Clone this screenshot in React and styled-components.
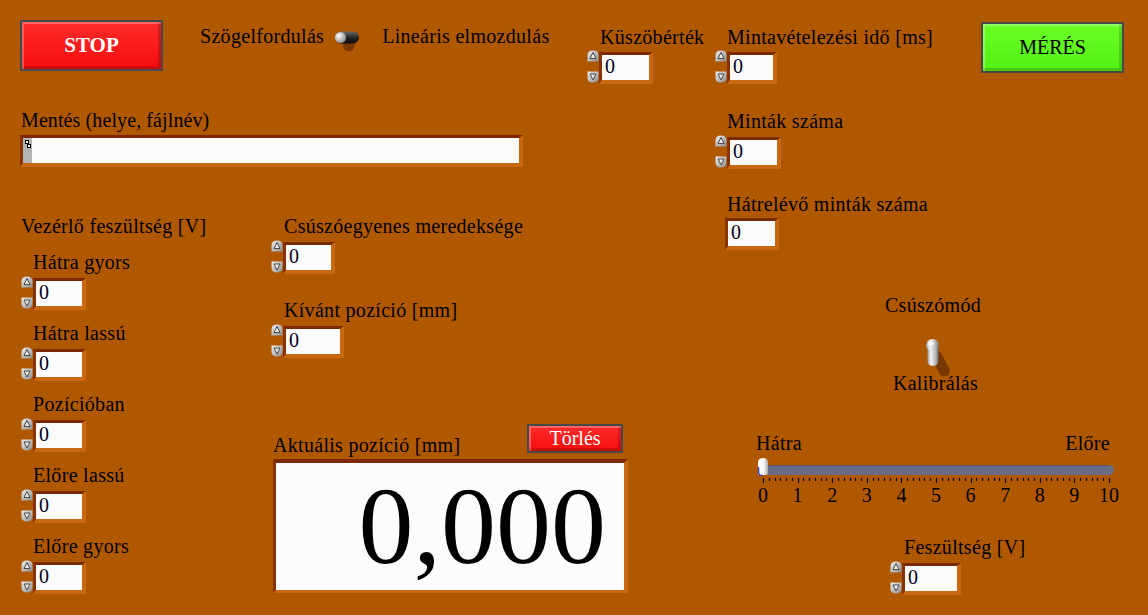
import React from 'react';
import styled, { createGlobalStyle } from 'styled-components';

const GlobalStyle = createGlobalStyle`
  html, body {
    margin: 0;
    padding: 0;
    background: #b05800;
  }
  body {
    font-family: 'Liberation Serif', 'Times New Roman', serif;
  }
`;

const Panel = styled.div`
  width: 1148px;
  height: 615px;
  overflow: hidden;
  display: flex;
  background: #b05800;
  color: #000;
  font-family: 'Liberation Serif', 'Times New Roman', serif;
  font-size: 20px;
`;

const LeftArea = styled.div`
  width: 714px;
  display: flex;
  flex-direction: column;
`;

const RightArea = styled.div`
  flex: 1;
  display: flex;
  flex-direction: column;
`;

const Row = styled.div`
  display: flex;
  align-items: flex-start;
`;

const Column = styled.div`
  display: flex;
  flex-direction: column;
  align-items: flex-start;
  margin-top: ${(p) => p.$top || 0}px;
  margin-left: ${(p) => p.$left || 0}px;
  width: ${(p) => (p.$width ? `${p.$width}px` : 'auto')};
`;

const Label = styled.div`
  height: 22px;
  line-height: 22px;
  font-size: 20px;
  letter-spacing: ${(p) => p.$spacing ?? 0.3}px;
  white-space: nowrap;
  margin-top: ${(p) => p.$top || 0}px;
  margin-left: ${(p) => p.$indent || 0}px;
`;

/* ---------- numeric controls ---------- */

const NumRow = styled.div`
  display: flex;
  align-items: flex-start;
  height: 34px;
  margin-top: ${(p) => p.$gap ?? 3}px;
`;

const Spinner = styled.div`
  width: 12px;
  height: 33px;
  display: flex;
  flex-direction: column;
  justify-content: space-between;
  align-items: flex-start;
`;

const Field = styled.div`
  box-sizing: border-box;
  width: ${(p) => p.$w || 53}px;
  height: 32px;
  margin-top: ${(p) => p.$top ?? 2}px;
  margin-left: ${(p) => p.$left || 0}px;
  border-style: solid;
  border-width: 3px 4px 4px 3px;
  border-color: #7a2900 #c9690f #c9690f #8a3300;
  background: #fbfbfb;
  padding-left: 3px;
  font-size: 20px;
  line-height: 23px;
  color: #000018;
`;

const SpinArrow = ({ down }) => (
  <svg width="12" height="12" viewBox="0 0 12 12">
    <defs>
      <linearGradient id={down ? 'spinDn' : 'spinUp'} x1="0" y1="0" x2="1" y2="1">
        <stop offset="0" stopColor="#f0f0f0" />
        <stop offset="1" stopColor="#8a8a8a" />
      </linearGradient>
    </defs>
    {down ? (
      <>
        <path d="M0.5,0.5 H11.5 V6.5 Q11.5,11.5 6,11.5 Q0.5,11.5 0.5,6.5 Z" fill="url(#spinDn)" />
        <polygon points="3,3 9,3 6,9" fill="#e8e8e8" stroke="#3c3c3c" strokeWidth="0.9" />
      </>
    ) : (
      <>
        <path d="M0.5,11.5 V5.5 Q0.5,0.5 6,0.5 Q11.5,0.5 11.5,5.5 V11.5 Z" fill="url(#spinUp)" />
        <polygon points="6,2.5 9,8.5 3,8.5" fill="#e8e8e8" stroke="#3c3c3c" strokeWidth="0.9" />
      </>
    )}
  </svg>
);

const Numeric = ({ w, gap, value = '0' }) => (
  <NumRow $gap={gap}>
    <Spinner>
      <SpinArrow />
      <SpinArrow down />
    </Spinner>
    <Field $w={w}>{value}</Field>
  </NumRow>
);

/* ---------- buttons ---------- */

const PanelButton = styled.button`
  box-sizing: border-box;
  width: ${(p) => p.$w}px;
  height: ${(p) => p.$h}px;
  padding: 0;
  border: 2px solid #484848;
  background: ${(p) =>
    p.$green
      ? 'linear-gradient(#6aff26, #52f012)'
      : 'linear-gradient(#ff2c2c, #f60c0c)'};
  box-shadow: inset 2px 2px 0 rgba(255, 255, 255, 0.28),
    inset -3px -3px 0 rgba(0, 0, 0, 0.16);
  font-family: 'Liberation Serif', 'Times New Roman', serif;
  font-size: ${(p) => p.$size || 20}px;
  font-weight: ${(p) => (p.$bold ? 700 : 400)};
  color: ${(p) => (p.$green ? '#000' : '#fff')};
  margin-top: ${(p) => p.$top || 0}px;
  margin-left: ${(p) => p.$left || 0}px;
  margin-right: ${(p) => p.$right || 0}px;
  cursor: pointer;
`;

/* ---------- switches ---------- */

const HorizontalToggle = () => (
  <svg width="28" height="22" viewBox="0 0 28 22" style={{ marginTop: 6, marginLeft: 10 }}>
    <defs>
      <linearGradient id="hBody" x1="0" y1="0" x2="0" y2="1">
        <stop offset="0" stopColor="#6a6a6a" />
        <stop offset="0.5" stopColor="#262626" />
        <stop offset="1" stopColor="#0c0c0c" />
      </linearGradient>
      <radialGradient id="hKnob" cx="0.35" cy="0.35" r="0.7">
        <stop offset="0" stopColor="#ffffff" />
        <stop offset="1" stopColor="#8a8a8a" />
      </radialGradient>
    </defs>
    <ellipse cx="15" cy="14" rx="6" ry="6.5" fill="#6a3004" opacity="0.75" />
    <rect x="1" y="0.5" width="24" height="12" rx="6" fill="url(#hBody)" />
    <circle cx="6.5" cy="6.5" r="5.6" fill="url(#hKnob)" />
  </svg>
);

const VerticalToggle = () => (
  <svg width="40" height="56" viewBox="0 0 40 56" style={{ overflow: 'visible' }}>
    <defs>
      <linearGradient id="vLever" x1="0" y1="0" x2="1" y2="0">
        <stop offset="0" stopColor="#9a9a9a" />
        <stop offset="0.3" stopColor="#f2f2f2" />
        <stop offset="0.7" stopColor="#bdbdbd" />
        <stop offset="1" stopColor="#6e6e6e" />
      </linearGradient>
    </defs>
    <rect x="20" y="34" width="11" height="28" rx="5.5" transform="rotate(-28 25 44)" fill="#6a3004" opacity="0.8" />
    <rect x="14.5" y="27" width="11" height="23" rx="5" fill="url(#vLever)" />
    <ellipse cx="19.5" cy="29" rx="6.5" ry="6" fill="url(#vLever)" />
    <ellipse cx="18" cy="27.5" rx="3" ry="2" fill="#fff" opacity="0.7" />
  </svg>
);

/* ---------- path box ---------- */

const PathBox = styled.div`
  box-sizing: border-box;
  display: flex;
  width: 503px;
  height: 32px;
  margin-top: 4px;
  margin-left: -1px;
  border-style: solid;
  border-width: 3px 4px 4px 3px;
  border-color: #7a2900 #c9690f #c9690f #8a3300;
  background: #fbfbfb;
`;

const BrowseStrip = styled.div`
  width: 9px;
  height: 100%;
  background: #b4b4b4;
  display: flex;
  justify-content: center;
`;

const BrowseIcon = () => (
  <svg width="9" height="25" viewBox="0 0 9 25">
    <rect x="2.5" y="2.5" width="3" height="3" fill="#fff" stroke="#000" strokeWidth="1" />
    <rect x="4.5" y="6.5" width="3" height="3" fill="#fff" stroke="#000" strokeWidth="1" />
  </svg>
);

/* ---------- indicator ---------- */

const IndicatorHead = styled.div`
  display: flex;
  align-items: flex-start;
  width: 355px;
  margin-top: 66px;
  margin-left: 2px;
  height: 32px;
`;

const Indicator = styled.div`
  box-sizing: border-box;
  width: 355px;
  height: 134px;
  margin-top: 3px;
  margin-left: 2px;
  border-style: solid;
  border-width: 4px 4px 3px 3px;
  border-color: #7a2900 #c9690f #c9690f #8a3300;
  background: #fcfcfc;
  text-align: right;
  padding: 2px 18px 0 0;
  font-size: 110px;
  line-height: 122px;
  color: #000;
`;

/* ---------- slider ---------- */

const SliderBlock = styled.div`
  width: 360px;
  margin-top: 38px;
  margin-left: 42px;
  display: flex;
  flex-direction: column;
`;

const SliderEnds = styled.div`
  display: flex;
  justify-content: space-between;
  padding-right: 6px;
`;

const ScaleNumbers = styled.div`
  display: grid;
  grid-template-columns: repeat(11, 34.6px);
  margin-left: -10.3px;
  height: 22px;
  line-height: 22px;
  font-size: 20px;
  text-align: center;
`;

const SliderTrack = () => {
  const unit = 34.6;
  const ticks = [];
  for (let i = 0; i <= 60; i += 1) {
    const x = Math.round(7 + (i * unit) / 6) + 0.5;
    const major = i % 6 === 0;
    ticks.push(
      <line key={i} x1={x} x2={x} y1={22} y2={major ? 27 : 25} stroke="#140700" strokeWidth="1.2" />
    );
  }
  return (
    <svg width="360" height="28" viewBox="0 0 360 28" style={{ marginTop: 2 }}>
      <defs>
        <linearGradient id="thumb" x1="0" y1="0" x2="1" y2="0">
          <stop offset="0" stopColor="#ffffff" />
          <stop offset="0.6" stopColor="#f4f4f4" />
          <stop offset="1" stopColor="#a8a8a8" />
        </linearGradient>
      </defs>
      <rect x="2" y="9" width="356" height="10" rx="5" fill="#6b6b85" />
      <line x1="6" x2="354" y1="9.5" y2="9.5" stroke="#54546a" strokeWidth="1" />
      {ticks}
      <path d="M2,18 V6.5 Q2,2 7,2 Q12,2 12,6.5 V17 Q12,19 10,19 H4 Q2,19 2,18 Z" fill="url(#thumb)" />
      <path d="M2.6,11 V17 Q3,19.4 6.5,19.4" fill="none" stroke="#1d3dd0" strokeWidth="1.3" />
    </svg>
  );
};

const scale = [0, 1, 2, 3, 4, 5, 6, 7, 8, 9, 10];

const voltageSteps = ['Hátra gyors', 'Hátra lassú', 'Pozícióban', 'Előre lassú', 'Előre gyors'];

export default function App() {
  return (
    <>
      <GlobalStyle />
      <Panel>
        <LeftArea>
          <Row>
            <PanelButton $w={143} $h={51} $top={20} $left={20} $bold $size={21}>
              STOP
            </PanelButton>
            <Row style={{ width: 387, marginLeft: 37, marginTop: 25 }}>
              <Label>Szögelfordulás</Label>
              <HorizontalToggle />
              <Label $indent={20}>Lineáris elmozdulás</Label>
            </Row>
            <Column $top={26}>
              <Label $indent={13}>Küszöbérték</Label>
              <Numeric w={54} gap={2} />
            </Column>
          </Row>

          <Column $top={25} $left={21}>
            <Label $spacing={0.1}>Mentés (helye, fájlnév)</Label>
            <PathBox>
              <BrowseStrip>
                <BrowseIcon />
              </BrowseStrip>
            </PathBox>
          </Column>

          <Row style={{ marginTop: 48 }}>
            <Column $left={21} $width={250}>
              <Label>Vezérlő feszültség [V]</Label>
              {voltageSteps.map((name, i) => (
                <Column key={name} $top={i === 0 ? 14 : 12}>
                  <Label $indent={12}>{name}</Label>
                  <Numeric w={53} />
                </Column>
              ))}
            </Column>

            <Column>
              <Label $indent={13}>Csúszóegyenes meredeksége</Label>
              <Numeric w={52} />
              <Label $indent={13} $top={25}>Kívánt pozíció [mm]</Label>
              <Numeric w={61} />
              <IndicatorHead>
                <Label $top={10}>Aktuális pozíció [mm]</Label>
                <PanelButton $w={96} $h={29} $right={5} style={{ marginLeft: 'auto' }}>
                  Törlés
                </PanelButton>
              </IndicatorHead>
              <Indicator>0,000</Indicator>
            </Column>
          </Row>
        </LeftArea>

        <RightArea>
          <Row>
            <Column $left={1} $width={266} $top={26}>
              <Label $indent={12}>Mintavételezési idő [ms]</Label>
              <Numeric w={50} gap={2} />
              <Label $indent={12} $top={26}>Minták száma</Label>
              <Numeric w={54} />
              <Label $indent={12} $top={24}>Hátrelévő minták száma</Label>
              <Field $w={54} $top={3} $left={10}>0</Field>
            </Column>
            <PanelButton $green $w={143} $h={51} $top={22}>
              MÉRÉS
            </PanelButton>
          </Row>

          <Column $top={44} $left={149} $width={140} style={{ alignItems: 'center' }}>
            <Label>Csúszómód</Label>
            <VerticalToggle />
            <Label $indent={5}>Kalibrálás</Label>
          </Column>

          <SliderBlock>
            <SliderEnds>
              <Label>Hátra</Label>
              <Label>Előre</Label>
            </SliderEnds>
            <SliderTrack />
            <ScaleNumbers>
              {scale.map((n) => (
                <span key={n}>{n}</span>
              ))}
            </ScaleNumbers>
          </SliderBlock>

          <Column $top={30} $left={176}>
            <Label $indent={14}>Feszültség [V]</Label>
            <Numeric w={59} />
          </Column>
        </RightArea>
      </Panel>
    </>
  );
}
